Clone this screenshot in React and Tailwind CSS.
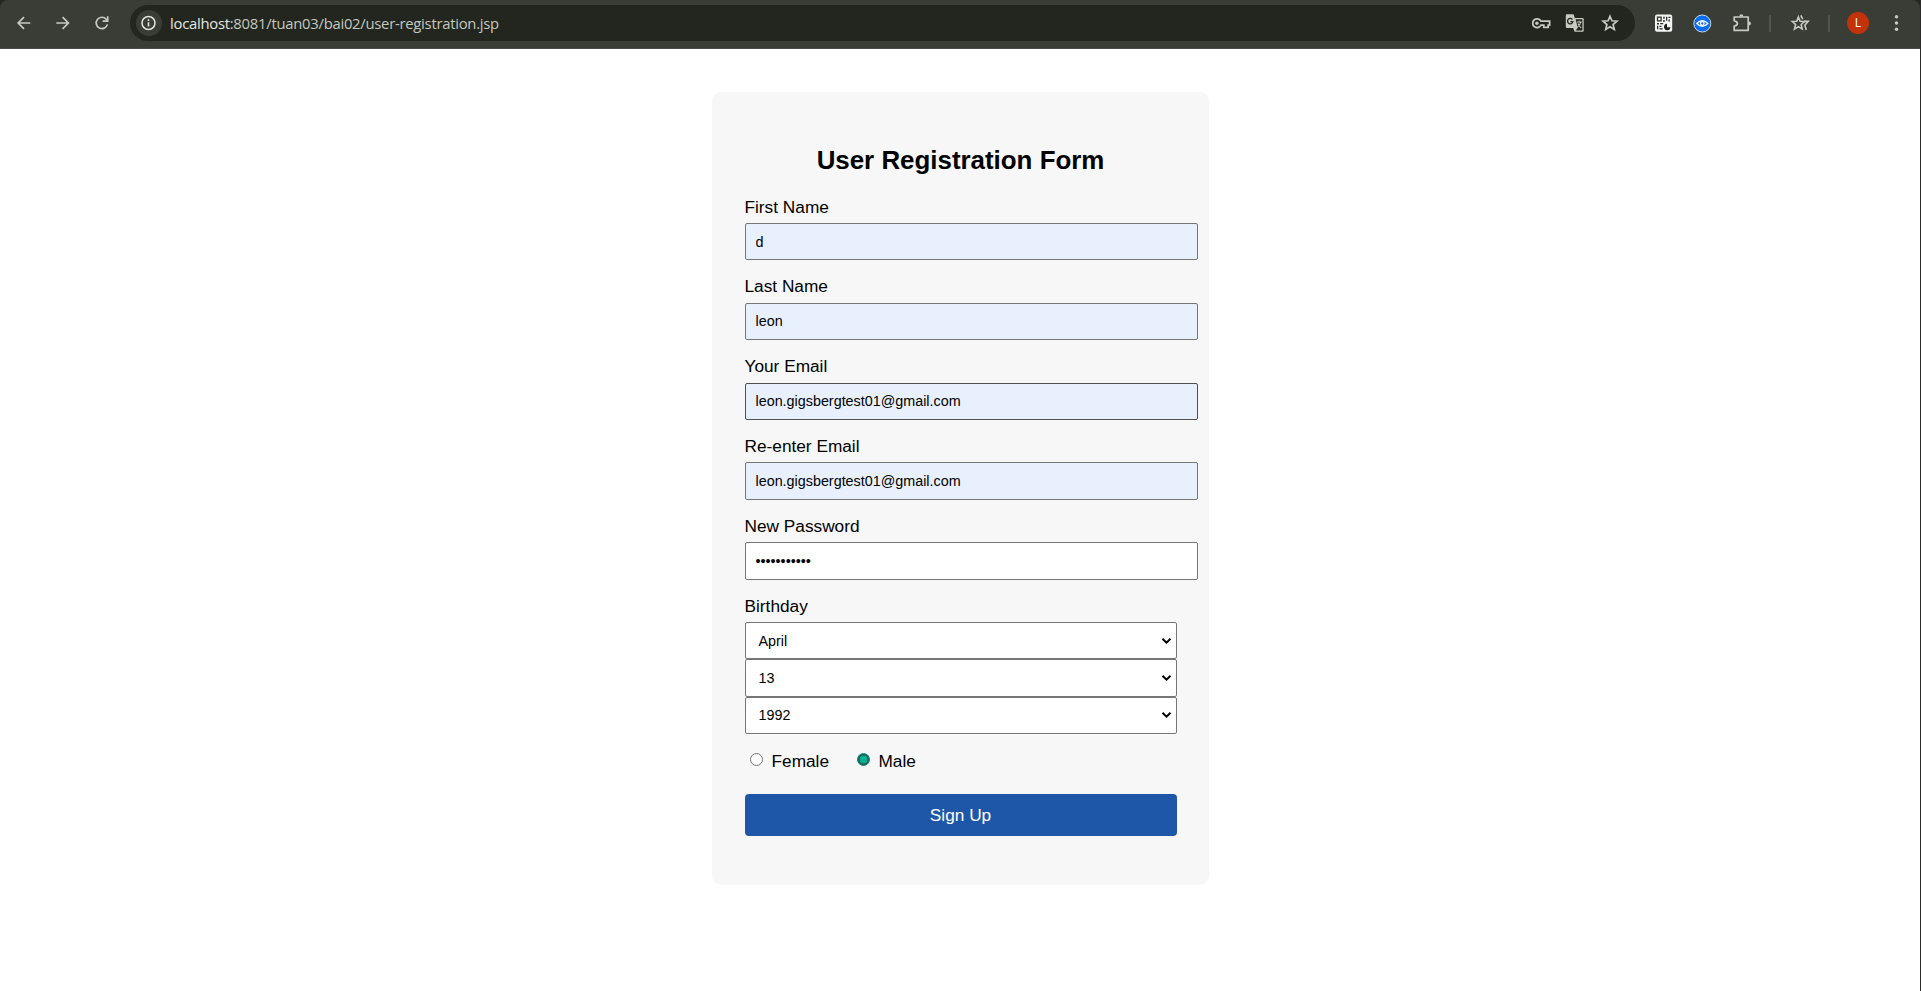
import React from 'react';

const stroke = { fill: 'none', stroke: '#c7cac0', strokeWidth: 1.7 };

function Icon({ children, className = '' }) {
  return (
    <svg viewBox="0 0 20 20" width="20" height="20" className={'block shrink-0 ' + className}>
      {children}
    </svg>
  );
}

function Divider({ className }) {
  return <div className={'h-[17px] w-[2px] shrink-0 bg-[#50554c] ' + className} />;
}

function BrowserBar() {
  return (
    <header className="h-[49px] shrink-0 bg-[#22261f]">
      <div className="flex h-[49px] items-center rounded-t-[8px] border-b border-[#4a4849] bg-[#393d36] pb-[2px] pl-[14px]">
        <Icon>
          <path {...stroke} d="M16.300 10H4.600M10 4.200 4.200 10l5.800 5.800" />
        </Icon>
        <Icon className="ml-[19px]">
          <path {...stroke} d="M3.300 10H15.200M9.600 4.200l5.800 5.800-5.800 5.800" />
        </Icon>
        <Icon className="ml-[19px]">
          <path {...stroke} d="M15.400 11.400A5.700 5.700 0 1 1 14.200 6.200L15.600 7.800" />
          <path {...stroke} d="M15.700 3.300V8.100H10.600" />
        </Icon>
        <div className="ml-[18px] flex h-9 w-[1505px] items-center rounded-full bg-[#22261f] pr-[15px] pl-[6px]">
          <div className="flex size-[26px] items-center justify-center rounded-full bg-[#393d36]">
            <svg viewBox="0 0 16 16" width="16" height="16">
              <circle cx="7.500" cy="8" r="6.500" fill="none" stroke="#e3e5dd" strokeWidth="1.500" />
              <path d="M7.500 7.200V11.500M7.500 4.300V5.900" stroke="#e3e5dd" strokeWidth="1.600" fill="none" />
            </svg>
          </div>
          <div className="ml-2 flex-1 font-['Open_Sans','Noto_Sans',sans-serif] text-[14.800px] leading-5 tracking-[-0.25px] whitespace-nowrap text-[#c5c8bf]">
            <span className="text-[#e6e8e1]">localhost</span>:8081/tuan03/bai02/user-registration.jsp
          </div>
          <Icon>
            <path {...stroke} strokeWidth="1.800" d="M10 8.200A4.400 4.400 0 1 0 10 12.200H12.800V14.400H17.200V12.200H18.600V8.200Z" />
            <circle cx="5.900" cy="10.200" r="1.700" fill="#c7cac0" />
          </Icon>
          <Icon className="ml-[14px]">
            <path d="M9.800 5H17.400A1.300 1.300 0 0 1 18.700 6.300V17.400A1.300 1.300 0 0 1 17.400 18.700H9.600L8.200 15Z" fill="#c7cac0" />
            <path d="M10.500 6.300H17.400V17.400H10.600L12.600 15Z" fill="#22261f" />
            <path d="M2 1.200H8.600L12.800 15H2A1.200 1.200 0 0 1 .8 13.800V2.400A1.200 1.200 0 0 1 2 1.200Z" fill="#c7cac0" />
            <path d="M7.400 6.500A2.700 2.700 0 1 0 7.900 8.700H5.400" fill="none" stroke="#22261f" strokeWidth="1.300" />
            <path d="M11.600 9H16.800M14.200 7.700V9M15.900 9Q15.200 12 12.600 13.800M13 10.500Q14 13.200 16.200 14.700" fill="none" stroke="#c7cac0" strokeWidth="1.100" />
          </Icon>
          <Icon className="ml-[15px]">
            <path {...stroke} d="M10 3.200 11.900 7.800 16.900 8.200 13.100 11.500 14.300 16.400 10 13.800 5.700 16.400 6.900 11.500 3.100 8.200 8.100 7.800Z" />
          </Icon>
        </div>
        <Icon className="ml-[18px]">
          <rect x="2" y="1.500" width="17.200" height="17.200" rx="2" fill="#f4f4f2" />
          <path d="M4.500 4.200h3.600v3.600H4.500z" fill="none" stroke="#2b2f29" strokeWidth="1.300" />
          <path d="M10.200 3.700h1.500v2h-1.500zM13 3.700h1.300v4H13zM15.500 3.700h2v1.400h-2zM15.500 6.500h1.400v2h-1.400zM10.200 7h1.500v2h-1.500zM4 10h2v1.400H4zM7.200 10h3v1.300h-3zM4 12.700h1.300v3.600H4zM6.500 12.700h2v1.300h-2zM6.500 15.200h3.200v1.300H6.500z" fill="#2b2f29" />
          <path d="M14 10.800A3.200 3.200 0 1 0 17.400 14.200H14Z" fill="#1b1e19" />
        </Icon>
        <Icon className="ml-[19px]">
          <circle cx="10.300" cy="10.500" r="8.500" fill="#0a6cf0" stroke="#dbe6f2" strokeWidth="0.900" />
          <path d="M4.800 10.500Q10.300 4.900 15.800 10.500Q10.300 16.100 4.800 10.500Z" fill="none" stroke="#fff" strokeWidth="1.300" />
          <circle cx="10.300" cy="10.500" r="1.800" fill="none" stroke="#fff" strokeWidth="1.300" />
        </Icon>
        <Icon className="ml-[20px]">
          <path {...stroke} d="M3 4H16.200V17.400H2.200V13.200Q5.400 12.500 5.400 10.500T2.200 7.600V4Z" strokeLinejoin="round" />
          <path d="M7.300 3.600a2 2.400 0 0 1 4 0zM16.600 8.500a2.400 2 0 0 1 0 4z" fill="#c7cac0" />
        </Icon>
        <Divider className="ml-[17px]" />
        <Icon className="ml-[19px]">
          <path {...stroke} strokeWidth="1.600" d="M8.400 4 10.100 8.200 14.500 8.500 11.200 11.500 12.200 16.100 8.400 13.600 4.500 16.100 5.600 11.500 2.200 8.500 6.700 8.200Z" />
          <path {...stroke} strokeWidth="1.600" d="M10.800 2.300 12.700 6.200M14 8.400H18.200L14.800 12.100 16.300 17.100" />
        </Icon>
        <Divider className="ml-[18px]" />
        <div className="ml-[17px] flex size-[22px] shrink-0 items-center justify-center rounded-full bg-[#c2330b] font-['Open_Sans',sans-serif] text-[12px] leading-none text-white">
          L
        </div>
        <Icon className="ml-[17px]">
          <circle cx="10.500" cy="3.700" r="1.700" fill="#c7cac0" />
          <circle cx="10.500" cy="10" r="1.700" fill="#c7cac0" />
          <circle cx="10.500" cy="16.300" r="1.700" fill="#c7cac0" />
        </Icon>
      </div>
    </header>
  );
}

function Field({ label, value, className, labelClass = 'pt-px', type = 'text' }) {
  return (
    <div className="flex flex-col">
      <label className={'h-[28px] text-[17.25px] leading-5 whitespace-nowrap ' + labelClass}>{label}</label>
      <input
        type={type}
        defaultValue={value}
        className={'w-[453px] rounded-[2px] border px-[10px] text-[14.35px] outline-none ' + className}
      />
    </div>
  );
}

function Select({ value, className, textClass = 'pt-[2px]' }) {
  return (
    <div className={'flex items-center justify-between rounded-[2px] border border-[#767676] bg-white pr-[4px] pl-[13px] text-[14.35px] ' + className}>
      <span className={textClass}>{value}</span>
      <svg viewBox="0 0 11 8" width="11" height="8" className="block">
        <path d="M1.500 1.800 5.500 5.700 9.500 1.800" fill="none" stroke="#000" strokeWidth="2" />
      </svg>
    </div>
  );
}

export default function App() {
  return (
    <div className="flex h-[991px] w-[1921px] overflow-hidden bg-white font-['Liberation_Sans',Arial,sans-serif] text-black">
      <div className="flex w-[1920px] shrink-0 flex-col">
        <BrowserBar />
        <main className="flex flex-1 items-start justify-center pt-[43px]">
          <form className="flex h-[793px] w-[497px] flex-col rounded-[9px] bg-[#f7f7f7] pt-[53px] pr-8 pl-[33px]">
            <h1 className="h-[50px] text-center text-[25.9px] leading-[30px] font-bold">User Registration Form</h1>
            <div className="flex flex-col">
              <Field label="First Name" value="d" labelClass="pt-[2px]" className="h-[37px] border-[#767676] bg-[#e8f0fe]" />
              <div className="h-[15px]" />
              <Field label="Last Name" value="leon" className="h-[37px] border-[#767676] bg-[#e8f0fe] pb-[2px]" />
              <div className="h-[15px]" />
              <Field label="Your Email" value="leon.gigsbergtest01@gmail.com" className="h-[37px] border-[#4f4f4f] bg-[#e8f0fe] pb-[2px]" />
              <div className="h-[14px]" />
              <Field label="Re-enter Email" value="leon.gigsbergtest01@gmail.com" labelClass="pt-[2px]" className="h-[38px] border-[#767676] bg-[#e8f0fe]" />
              <div className="h-[14px]" />
              <Field label="New Password" value="leon1234567" type="password" labelClass="pt-[2px]" className="h-[38px] border-[#767676] bg-white" />
            </div>
            <div className="mt-[15px] h-[27px] pt-px text-[17.25px] leading-5">Birthday</div>
            <Select value="April" className="h-[37px]" />
            <Select value="13" className="h-[38px]" />
            <Select value="1992" className="h-[37px] pb-px" />
            <div className="mt-[17px] flex h-5 items-center text-[17.25px] leading-5">
              <span className="mb-[3px] ml-[5px] size-[13px] rounded-full border border-[#767676] bg-white" />
              <span className="ml-[9px] w-[85px]">Female</span>
              <span className="mb-[3px] size-[13px] rounded-full border border-[#0f8a75] bg-[#00b294] shadow-[inset_0_0_0_1.5px_#2f4f4a]" />
              <span className="ml-[9px]">Male</span>
            </div>
            <button type="button" className="mt-[23px] h-[42px] rounded-[4px] bg-[#1f57a8] pt-[2px] text-[17.25px] text-white">
              Sign Up
            </button>
          </form>
        </main>
      </div>
      <div className="w-px shrink-0 bg-[#2b2c2a]" />
    </div>
  );
}
